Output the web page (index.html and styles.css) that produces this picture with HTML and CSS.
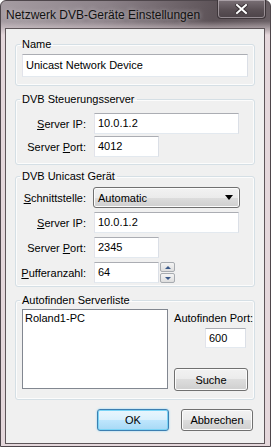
FILE: index.html
```html
<!DOCTYPE html>
<html lang="de">
<head>
    <meta charset="UTF-8">
    <title>Netzwerk DVB-Geräte Einstellungen</title>
    <link rel="stylesheet" href="styles.css">
</head>
<body>
    <div class="window">
        <div class="titlebar">
            <span class="title">Netzwerk DVB-Geräte Einstellungen</span>
            <div class="close-btn">
                <svg width="13" height="10" viewBox="0 0 13 10">
                    <path d="M2 1 L11 9 M11 1 L2 9" stroke="#3a3236" stroke-width="4" stroke-linecap="square"/>
                    <path d="M2 1 L11 9 M11 1 L2 9" stroke="#ffffff" stroke-width="2" stroke-linecap="square"/>
                </svg>
            </div>
        </div>

        <div class="client">
            <fieldset class="group group-name">
                <legend>Name</legend>
                <div class="textbox full">Unicast Network Device</div>
            </fieldset>

            <fieldset class="group group-control">
                <legend>DVB Steuerungsserver</legend>
                <div class="form-grid">
                    <label><u>S</u>erver IP:</label>
                    <div class="textbox ip">10.0.1.2</div>
                    <label>Server <u>P</u>ort:</label>
                    <div class="textbox port">4012</div>
                </div>
            </fieldset>

            <fieldset class="group group-unicast">
                <legend>DVB Unicast Gerät</legend>
                <div class="form-grid">
                    <label><u>S</u>chnittstelle:</label>
                    <div class="combo">
                        <span>Automatic</span>
                        <span class="combo-arrow"></span>
                    </div>
                    <label><u>S</u>erver IP:</label>
                    <div class="textbox ip">10.0.1.2</div>
                    <label>Server <u>P</u>ort:</label>
                    <div class="textbox port">2345</div>
                    <label><u>P</u>ufferanzahl:</label>
                    <div class="spin-row">
                        <div class="textbox port">64</div>
                        <div class="spinner">
                            <div class="spin-btn"><span class="tri up"></span></div>
                            <div class="spin-btn"><span class="tri down"></span></div>
                        </div>
                    </div>
                </div>
            </fieldset>

            <fieldset class="group group-search">
                <legend>Autofinden Serverliste</legend>
                <div class="search-row">
                    <div class="listbox">
                        <div class="list-item">Roland1-PC</div>
                    </div>
                    <div class="search-side">
                        <label>Autofinden Port:</label>
                        <div class="textbox small-port">600</div>
                        <div class="btn search-btn">Suche</div>
                    </div>
                </div>
            </fieldset>

            <div class="actions">
                <div class="btn default">OK</div>
                <div class="btn">Abbrechen</div>
            </div>
        </div>
    </div>
</body>
</html>
```

FILE: styles.css
```css
* {
    margin: 0;
    padding: 0;
    box-sizing: border-box;
}

body {
    font-family: "Liberation Sans", Arial, sans-serif;
    font-size: 11px;
    color: #000;
    background: #fff;
}

.window {
    width: 271px;
    height: 447px;
    display: flex;
    flex-direction: column;
    padding: 0 5px 2px 4px;
    border: 1px solid #4e464b;
    border-radius: 6px 6px 0 0;
    background:
        linear-gradient(to bottom, rgba(228, 216, 220, 0) 0, rgba(228, 216, 220, 0) 20px, #e4d7db 34px),
        linear-gradient(100deg, #a59ca2 0%, #8d838a 30%, #5d5358 62%, #6a6065 80%, #8b8288 100%);
}

.titlebar {
    height: 27px;
    display: flex;
    align-items: flex-start;
    margin: 0 -5px 0 -4px;
}

.title {
    font-size: 12px;
    margin: 7px 0 0 5px;
    color: #111;
    text-shadow: 0 0 5px rgba(230, 225, 228, 0.8);
}

.close-btn {
    margin: -1px 4px 0 auto;
    width: 49px;
    height: 19px;
    display: flex;
    align-items: center;
    justify-content: center;
    border: 1px solid #3e363a;
    border-top: none;
    border-radius: 0 0 4px 4px;
    background: linear-gradient(to bottom, #7a7076, #5a5055 55%, #4c4348);
    box-shadow: inset 0 0 0 1px rgba(210, 200, 206, 0.55);
}

.client {
    flex: 1;
    display: flex;
    flex-direction: column;
    background: #f0f0f0;
    border: 1px solid #5d5559;
    padding-top: 8px;
}

.group {
    margin: 0 9px;
    border: 1px solid #d5dfe5;
    border-radius: 3px;
    padding: 2px 6px 8px;
    box-shadow: inset 0 0 0 1px #fcfcfc;
}

.group + .group {
    margin-top: 6px;
}

.group legend {
    padding: 0 2px;
    margin-left: -2px;
    line-height: 15px;
    font-size: 11px;
}

.group-control {
    padding-top: 6px;
    padding-bottom: 7px;
}

.group-unicast {
    padding-top: 3px;
    padding-bottom: 3px;
}

.group + .group-unicast {
    margin-top: 4px;
}

.group-search {
    padding-top: 1px;
    padding-right: 0;
}

.textbox {
    height: 21px;
    line-height: 19px;
    padding: 0 3px;
    background: #fff;
    border: 1px solid;
    border-color: #abadb3 #dbdfe6 #e3e9ef #e2e3ea;
    white-space: nowrap;
}

.textbox.full {
    height: 23px;
    line-height: 21px;
    width: 226px;
}

.form-grid {
    display: grid;
    grid-template-columns: 64px auto;
    column-gap: 8px;
    row-gap: 2px;
    align-items: center;
    justify-items: start;
}

.group-unicast .form-grid {
    row-gap: 4px;
}

.form-grid label {
    justify-self: end;
}

.textbox.ip {
    width: 145px;
}

.textbox.port {
    width: 65px;
}

.combo {
    width: 147px;
    height: 21px;
    margin-left: -1px;
    display: flex;
    align-items: center;
    justify-content: space-between;
    padding: 0 6px 0 4px;
    border: 1px solid #707070;
    border-radius: 3px;
    background: linear-gradient(to bottom, #f2f2f2 0%, #ebebeb 50%, #dddddd 50%, #cfcfcf 100%);
    box-shadow: inset 0 0 0 1px #fcfcfc;
}

.combo-arrow {
    width: 0;
    height: 0;
    border-left: 4px solid transparent;
    border-right: 4px solid transparent;
    border-top: 5px solid #000;
}

.spin-row {
    display: flex;
    align-items: center;
    gap: 1px;
}

.spinner {
    display: flex;
    flex-direction: column;
    gap: 1px;
}

.spin-btn {
    width: 15px;
    height: 10px;
    display: flex;
    align-items: center;
    justify-content: center;
    border: 1px solid #a7abb0;
    border-radius: 2px;
    background: linear-gradient(to bottom, #f4f4f4, #dedede);
}

.tri {
    width: 0;
    height: 0;
    border-left: 3px solid transparent;
    border-right: 3px solid transparent;
}

.tri.up {
    border-bottom: 3px solid #3d5b8a;
}

.tri.down {
    border-top: 3px solid #3d5b8a;
}

.search-row {
    display: flex;
    gap: 5px;
}

.listbox {
    width: 146px;
    height: 80px;
    background: #fff;
    border: 1px solid #828790;
    padding: 2px 2px;
}

.list-item {
    line-height: 13px;
}

.search-side {
    width: 80px;
    display: flex;
    flex-direction: column;
    align-items: flex-end;
}

.search-side label {
    margin-top: 2px;
    line-height: 14px;
}

.textbox.small-port {
    width: 41px;
    height: 20px;
    line-height: 18px;
    margin: 3px 7px 0 0;
}

.btn {
    height: 23px;
    display: flex;
    align-items: center;
    justify-content: center;
    border: 1px solid #707070;
    border-radius: 3px;
    background: linear-gradient(to bottom, #f2f2f2 0%, #ebebeb 50%, #dddddd 50%, #cfcfcf 100%);
    box-shadow: inset 0 0 0 1px #fcfcfc;
}

.search-btn {
    width: 74px;
    margin: 20px 5px 0 0;
}

.actions {
    display: flex;
    justify-content: flex-end;
    gap: 12px;
    padding-right: 11px;
    margin-top: 9px;
}

.actions .btn {
    width: 72px;
    height: 22px;
}

.btn.default {
    border-color: #3c7fb1;
    background: linear-gradient(to bottom, #eaf6fd 0%, #d9f0fc 50%, #bee6fd 50%, #a7d9f5 100%);
    box-shadow: inset 0 0 0 1px #7ad4f6, 0 0 2px #7fd2f5;
}
```
